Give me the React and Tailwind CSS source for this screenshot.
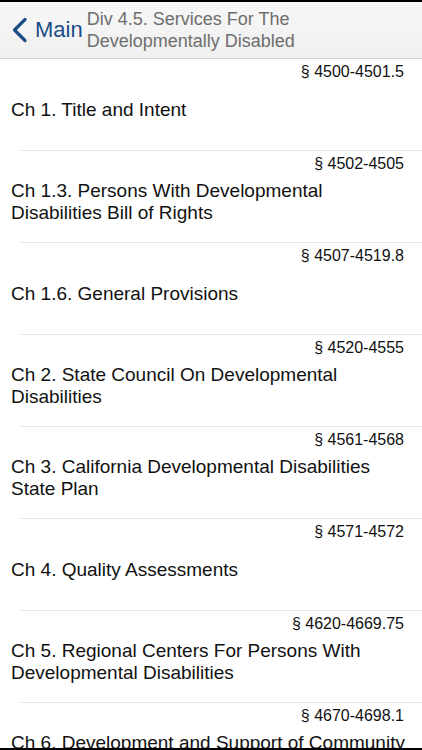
import React from "react";

const chapters = [
  { range: "§ 4500-4501.5", title: "Ch 1. Title and Intent" },
  { range: "§ 4502-4505", title: "Ch 1.3. Persons With Developmental Disabilities Bill of Rights" },
  { range: "§ 4507-4519.8", title: "Ch 1.6. General Provisions" },
  { range: "§ 4520-4555", title: "Ch 2. State Council On Developmental Disabilities" },
  { range: "§ 4561-4568", title: "Ch 3. California Developmental Disabilities State Plan" },
  { range: "§ 4571-4572", title: "Ch 4. Quality Assessments" },
  { range: "§ 4620-4669.75", title: "Ch 5. Regional Centers For Persons With Developmental Disabilities" },
  { range: "§ 4670-4698.1", title: "Ch 6. Development and Support of Community Services" },
];

function ChapterRow({ range, title }) {
  return (
    <div className="h-[92px] flex flex-col">
      <div className="pt-[4px] pr-[18px] text-right text-[16px] leading-[18px] text-[#111]">
        {range}
      </div>
      <div className="flex-1 flex items-center pl-[11px] pr-[6px] pb-[12px]">
        <div className="text-[19px] leading-[22px] text-[#111]">{title}</div>
      </div>
      <div className="ml-[20px] h-px bg-[#e9e9e9]"></div>
    </div>
  );
}

export default function App() {
  return (
    <div
      className="w-[422px] h-[750px] overflow-hidden bg-white flex flex-col"
      style={{ fontFamily: '"Liberation Sans", Arial, sans-serif' }}
    >
      <div className="h-[2px] bg-black shrink-0"></div>
      <div className="h-[57px] shrink-0 flex items-center bg-gradient-to-b from-[#f7f7f7] to-[#f0f0f0] border-b border-[#cfcfcf]">
        <svg className="ml-[11px] w-[17px] h-[26px]" viewBox="0 0 17 26" fill="none">
          <path d="M14 2.5L3.5 13L14 23.5" stroke="#1b4d86" strokeWidth="3.2" strokeLinecap="round" strokeLinejoin="round" />
        </svg>
        <span className="ml-[7px] text-[22px] text-[#1b4d86] leading-none">Main</span>
        <div className="ml-[4px] text-[18px] leading-[22px] text-[#6e6e6e]">
          <div>Div 4.5. Services For The</div>
          <div>Developmentally Disabled</div>
        </div>
      </div>
      <div className="flex-1 overflow-hidden">
        {chapters.map((c) => (
          <ChapterRow key={c.range} range={c.range} title={c.title} />
        ))}
      </div>
      <div className="h-[2px] bg-black shrink-0"></div>
    </div>
  );
}
